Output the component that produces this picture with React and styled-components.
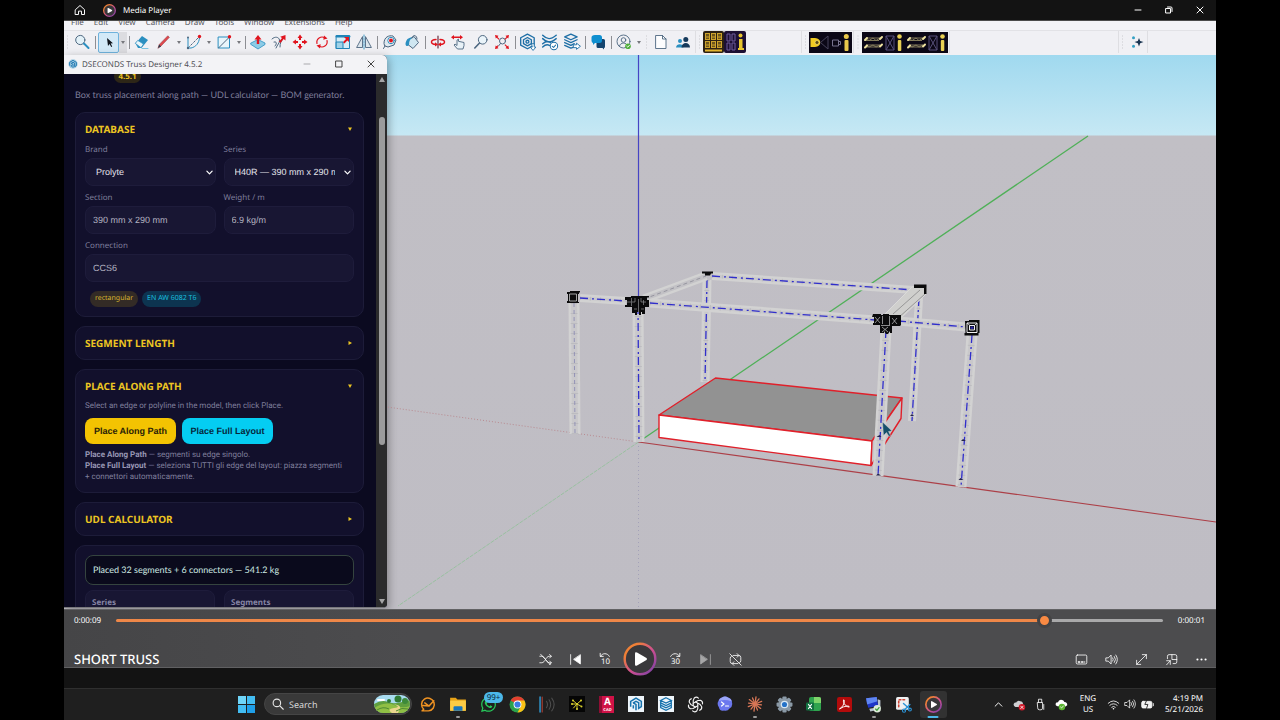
import React, { useState } from 'react';
import styled, { createGlobalStyle } from 'styled-components';
import { FaWhatsapp } from 'react-icons/fa';

const uiFont = '"Noto Sans", "Open Sans", sans-serif';
const leadFont = 'Lato, "Noto Sans", sans-serif';
const noteFont = 'Roboto, "Noto Sans", sans-serif';
const formFont = '"Liberation Sans", Arial, sans-serif';

const GlobalStyle = createGlobalStyle`
  * {
    box-sizing: border-box;
  }

  body {
    margin: 0;
    background: #000;
    font-family: ${uiFont};
    text-rendering: geometricPrecision;
    overflow: hidden;
  }

  button {
    display: flex;
    align-items: center;
    justify-content: center;
    margin: 0;
    padding: 0;
    border: 0;
    background: none;
    color: inherit;
    font: inherit;
  }

  button,
  input,
  select {
    text-rendering: inherit;
  }

  svg {
    display: block;
    flex: none;
  }
`;

const Screen = styled.div`
  display: flex;
  flex-direction: column;
  height: 100vh;
  padding: 0 5%;
`;

/* ---------- player title bar ---------- */

const TitleBar = styled.header`
  display: flex;
  align-items: center;
  height: 21px;
  flex: none;
  padding: 0 3px 0 9px;
  background: #131313;
  border-bottom: 1px solid #4c4c4c;
  color: #fff;
`;

const AppName = styled.span`
  flex: 1;
  padding: 2px 0 0 7px;
  font-size: 8px;
  line-height: 12px;
`;

const HomeButton = styled.button`
  width: 14px;
  margin-right: 16px;
`;

const CaptionButton = styled.button`
  width: 26px;
  height: 20px;
  margin-left: 5px;
`;

/* ---------- SketchUp chrome ---------- */

const MenuBar = styled.nav`
  display: flex;
  align-items: flex-end;
  gap: 10px;
  height: 9px;
  flex: none;
  padding: 0 7px 2px;
  overflow: hidden;
  background: #f3f3f7;
`;

const MenuLink = styled.a`
  color: #55565c;
  font-size: 8px;
  line-height: 10px;
  text-decoration: none;
`;

const Toolbar = styled.div`
  display: flex;
  height: 25px;
  flex: none;
  padding-bottom: 2px;
  background: #f0f0f4;
  border-top: 1px solid #e2e2e6;
`;

const ToolGroup = styled.div`
  display: grid;
  grid-auto-flow: column;
  grid-auto-columns: 1fr;
  width: ${props => props.$width}px;
`;

const Tool = styled.button`
  min-width: 0;
  height: 22px;
`;

const SelectedTool = styled(Tool)`
  width: 21px;
  height: 21px;
  align-self: center;
  margin: 0 0 0 1px;
  border: 1px solid #6fb2dc;
  border-radius: 2px;
  background: #d3e9f7;
`;

const Caret = styled.button`
  width: 8px;
  height: 21px;
  align-self: center;
  background: ${props => (props.$filled ? '#dcdce0' : 'none')};

  &::before {
    content: '';
    border: 2px solid transparent;
    border-top: 3px solid #77787d;
    border-bottom-width: 0;
  }
`;

const Separator = styled.span`
  width: 4px;
  height: 13px;
  align-self: center;
  background: linear-gradient(#8d8e93, #8d8e93) center / 1px 100% no-repeat;
`;

const Grip = styled.span`
  width: ${props => props.$width || 7}px;
  height: 16px;
  align-self: center;
  background: radial-gradient(circle, #c9c9ce 40%, transparent 45%) center / 3px 3px;
  background-clip: content-box;
  padding: 0 2px;
`;

const ToolbarEdge = styled.span`
  width: 2px;
  border-right: 1px solid #dedee2;
`;

const Gap = styled.span`
  flex: ${props => (props.$width ? 'none' : 1)};
  width: ${props => props.$width}px;
`;

const AssistantBar = styled.div`
  display: flex;
  width: 30px;
  margin-right: 68px;
  border: solid #dedee2;
  border-width: 0 1px;
`;

/* ---------- model viewport ---------- */

const Viewport = styled.main`
  display: flex;
  flex: 1;
  min-height: 0;
  background: linear-gradient(#a0d9ef 0, #c6e8f4 80px, #c1bfc5 81px, #bfbdc4 100%);
`;

const Scene = styled.svg`
  flex: 1;
  min-width: 0;
  width: 100%;
  height: 100%;
`;

const DialogWindow = styled.section`
  display: flex;
  flex-direction: column;
  flex: none;
  width: 323px;
  margin-bottom: 1px;
  overflow: hidden;
  border-bottom: 1px solid #77777b;
  border-radius: 0 5px 4px 0;
  background: #0b0a20;
  box-shadow: 2px 2px 8px rgba(0, 0, 0, 0.3);
`;

const DialogTitle = styled.header`
  display: flex;
  align-items: center;
  height: 19px;
  flex: none;
  padding: 0 0 1px 4px;
  background: #f3f3f6;
  color: #505157;
  font-size: 8px;
`;

const DialogName = styled.span`
  flex: 1;
  padding-left: 4px;
`;

const DialogButton = styled.button`
  width: 32px;
  height: 18px;
`;

const DialogBody = styled.div`
  display: flex;
  flex: 1;
  min-height: 0;
`;

const Content = styled.div`
  flex: 1;
  min-width: 0;
  overflow: hidden;
  padding: 0 12px 0 11px;
`;

const VersionRow = styled.div`
  margin-top: -4px;
  padding-left: 39px;
`;

const Badge = styled.span`
  display: block;
  width: 27px;
  border-radius: 7px;
  background: #2d2617;
  color: #e8c020;
  font-size: 8px;
  font-weight: 700;
  line-height: 13px;
  text-align: center;
`;

const Scrollbar = styled.div`
  display: flex;
  flex-direction: column;
  align-items: center;
  justify-content: space-between;
  width: 11px;
  padding: 3px 0;
  background: #2b2b2c;
`;

const Thumb = styled.span`
  width: 6px;
  height: 328px;
  margin-bottom: 120px;
  border-radius: 3px;
  background: #9b9b9c;
`;

const Lead = styled.p`
  margin: 6px 0 12px;
  color: #7f7e9b;
  font-family: ${leadFont};
  font-size: 9px;
  line-height: 11px;
`;

const Note = styled.p`
  margin: ${props => props.$margin || 0};
  color: #7f7e9b;
  font-family: ${noteFont};
  font-size: 8px;
  line-height: 11px;

  b {
    color: #9897b4;
  }
`;

const Card = styled.section`
  margin-bottom: 9px;
  padding: 9px;
  border: 1px solid #1d1c39;
  border-radius: 10px;
  background: #12102c;
`;

const CardHeader = styled.button`
  justify-content: space-between;
  width: 100%;
  height: 14px;
  padding-right: 1px;
  color: #ecc522;
  font-size: 10px;
  font-weight: 700;
  line-height: 14px;
`;

const Fields = styled.div`
  display: grid;
  grid-template-columns: 1fr 1fr;
  gap: 6px 8px;
  margin-top: 8px;
`;

const Field = styled.div`
  grid-column: ${props => (props.$wide ? '1 / -1' : 'auto')};
  min-width: 0;
`;

const Label = styled.label`
  display: block;
  margin-bottom: 2px;
  color: #7f7e9b;
  font-size: 8px;
  line-height: 12px;
`;

const TextInput = styled.input`
  display: block;
  width: 100%;
  height: 28px;
  padding: 0 7px;
  border: 1px solid #1e1c3b;
  border-radius: 8px;
  outline: 0;
  background: #181633;
  color: #b3b2c0;
  font-family: ${formFont};
  font-size: 9px;
`;

const SelectBox = styled.div`
  display: grid;
  align-items: center;

  > * {
    grid-area: 1 / 1;
  }

  svg {
    justify-self: end;
    margin-right: 3px;
    pointer-events: none;
  }
`;

const Select = styled.select`
  width: 100%;
  height: 28px;
  padding: 0 18px 0 10px;
  border: 1px solid #1e1c3b;
  border-radius: 8px;
  outline: 0;
  appearance: none;
  background: #181633;
  color: #e4e4ec;
  font-family: ${formFont};
  font-size: 9px;
`;

const Chips = styled.div`
  display: flex;
  gap: 4px;
  padding: 9px 5px 0;
`;

const Chip = styled.span`
  padding: 0 5px;
  border-radius: 8px;
  background: ${props => (props.$cyan ? '#0d3450' : '#332b26')};
  color: ${props => (props.$cyan ? '#19bede' : '#d9b52e')};
  font-size: 7px;
  line-height: 16px;
`;

const Actions = styled.div`
  display: flex;
  gap: 6px;
`;

const ActionButton = styled.button`
  width: 91px;
  height: 26px;
  border-radius: 8px;
  background: ${props => (props.$cyan ? '#05cdf2' : '#f3c302')};
  color: ${props => (props.$cyan ? '#06283c' : '#2a2208')};
  font-family: ${formFont};
  font-size: 9px;
  font-weight: 700;
`;

const Status = styled.output`
  display: block;
  padding: 0 7px;
  border: 1px solid #35443f;
  border-radius: 8px;
  background: #0a0a1c;
  color: #cfe9e2;
  font-family: ${leadFont};
  font-size: 9px;
  line-height: 28px;
`;

const Stats = styled.div`
  display: grid;
  grid-template-columns: 1fr 1fr;
  gap: 9px;
  margin-top: 5px;
`;

const Stat = styled.div`
  height: 40px;
  padding: 6px;
  border: 1px solid #1e1c3b;
  border-radius: 8px;
  background: #181633;
  color: #8584a3;
  font-size: 8px;
  font-weight: 700;
  line-height: 12px;
`;

/* ---------- playback controls ---------- */

const Controls = styled.section`
  height: 59px;
  flex: none;
  border-top: 1px solid #626264;
  border-bottom: 1px solid #606062;
  background: linear-gradient(90deg, #454547, #4c4c4e 30%);
  color: #fff;
`;

const SeekRow = styled.div`
  display: flex;
  align-items: center;
  height: 20px;
  padding: 0 11px 0 10px;
`;

const Time = styled.span`
  width: 42px;
  padding-top: 2px;
  font-size: 8px;
  line-height: 12px;
  text-align: ${props => (props.$end ? 'right' : 'left')};
`;

const Seek = styled.input`
  flex: 1;
  min-width: 0;
  height: 15px;
  margin: 0;
  appearance: none;
  background: none;

  &::-webkit-slider-runnable-track {
    height: 3px;
    border-radius: 2px;
    background: linear-gradient(90deg, #ee8748 89%, #a9a9aa 89%);
  }

  &::-webkit-slider-thumb {
    width: 15px;
    height: 15px;
    margin-top: -6px;
    appearance: none;
    border: 3px solid #434345;
    border-radius: 50%;
    background: #f98a43;
  }
`;

const ButtonRow = styled.div`
  display: grid;
  grid-template-columns: 1fr auto 1fr;
  align-items: center;
  height: 37px;
  padding: 20px 3px 0;
`;

const VideoTitle = styled.h1`
  margin: 0;
  padding-left: 7px;
  font-size: 13px;
  font-weight: 500;
  line-height: 14px;
`;

const ButtonGroup = styled.div`
  display: flex;
  align-items: center;
  justify-content: flex-end;
  gap: 6px;
  height: 18px;
`;

const IconButton = styled.button`
  width: 24px;
  height: 18px;
  opacity: ${props => (props.disabled ? 0.5 : 1)};
`;

const PlayButton = styled.button`
  position: relative;
  width: 34px;
  height: 34px;
`;

const LowerStrip = styled.div`
  height: 20px;
  flex: none;
  background: #131313;
`;

/* ---------- taskbar ---------- */

const Taskbar = styled.footer`
  display: flex;
  align-items: center;
  height: 32px;
  flex: none;
  padding: 0 13px 1px 174px;
  border-top: 1px solid #2f2f2f;
  background: #1f1f1f;
  color: #fff;
`;

const SearchBox = styled.div`
  display: flex;
  align-items: center;
  width: 148px;
  height: 22px;
  margin: 0 2px 0 9px;
  padding: 0 1px 0 7px;
  border: 1px solid #454545;
  border-radius: 11px;
  background: #393939;
`;

const SearchInput = styled.input`
  flex: 1;
  min-width: 0;
  padding: 0 0 0 5px;
  border: 0;
  outline: 0;
  background: none;
  color: #fff;
  font-family: ${uiFont};
  font-size: 9px;

  &::placeholder {
    color: #d8d8d8;
  }
`;

const Apps = styled.div`
  display: grid;
  grid-template-columns: repeat(18, 1fr);
  justify-items: center;
  width: 534px;
  flex: none;
`;

const AppButton = styled.button`
  position: relative;
  width: 27px;
  height: 27px;
  border-radius: 3px;
  background: ${props => (props.$active ? '#323232' : 'none')};

  &::after {
    content: '';
    position: absolute;
    bottom: 0;
    left: 50%;
    width: ${props => (props.$active ? 11 : 4)}px;
    height: 2px;
    border-radius: 1px;
    background: ${props => (props.$active ? '#4cb8ea' : '#9a9a9a')};
    transform: translateX(-50%);
    display: ${props => (props.$active || props.$running ? 'block' : 'none')};
  }
`;

const CountBadge = styled.span`
  position: absolute;
  top: 1px;
  left: 9px;
  padding: 0 3px;
  border-radius: 6px;
  background: #4cb8ea;
  color: #0c2a3a;
  font-size: 8px;
  line-height: 11px;
`;

const Tray = styled.div`
  display: flex;
  align-items: center;
  margin-left: auto;
`;

const TrayButton = styled.button`
  width: ${props => props.$width || 21}px;
  height: 24px;
`;

const TrayText = styled.span`
  width: ${props => props.$width}px;
  font-size: 8px;
  line-height: 11px;
  text-align: ${props => (props.$end ? 'right' : 'center')};
`;

/* ---------- drawings ---------- */

const Icon = ({ size = 16, box = 16, children, ...rest }) => (
  <svg
    width={size}
    height={size}
    viewBox={`0 0 ${box} ${box}`}
    fill="none"
    stroke="currentColor"
    strokeLinecap="round"
    strokeLinejoin="round"
    aria-hidden="true"
    {...rest}
  >
    {children}
  </svg>
);

const BLUE = '#2b8fc0';
const SLATE = '#4d6780';
const RED = '#e0141e';

const toolIcons = {
  search: (
    <Icon stroke={SLATE}>
      <circle cx="6.3" cy="6" r="4.6" fill="#e3f1f8" />
      <path d="M10 9.5l4.5 4.5" stroke={BLUE} strokeWidth="2" />
    </Icon>
  ),
  select: (
    <Icon>
      <path d="M6 4l1 8 1.6-2 1.6 3 1-.6-1.5-2.8 2.3-.3z" fill="#10151c" stroke="none" />
    </Icon>
  ),
  eraser: (
    <Icon>
      <path d="M1.5 9.5L8 2l6 4-6.5 8H4z" fill={BLUE} stroke="none" />
      <path d="M1.5 9.5l5.5 4.2L9.5 10 4 6.6z" fill="#e8f5fb" stroke={BLUE} strokeWidth=".7" />
      <path d="M8 14.5h6" stroke="#7cc4e2" />
    </Icon>
  ),
  pencil: (
    <Icon>
      <path d="M2 14l1.3-3.6L11.8 1.800l1.600 1.500-8.500 8.900z" fill="#e0474c" stroke="#9c4a50" strokeWidth=".6" />
      <path d="M2 14l1.2-3.4 1.9 1.8z" fill="#2e3d4e" stroke="none" />
    </Icon>
  ),
  arc: (
    <Icon stroke={BLUE}>
      <path d="M2 4v10h3C10 13 13 9 13.500 4" />
      <path d="M2 14L13 3" strokeDasharray="2 2" stroke={SLATE} />
      <circle cx="2" cy="3.500" r="1" fill={SLATE} stroke="none" />
      <circle cx="2" cy="14" r="1.200" fill={SLATE} stroke="none" />
      <circle cx="13.500" cy="2.500" r="1.700" fill={RED} stroke="none" />
    </Icon>
  ),
  rect: (
    <Icon stroke={BLUE}>
      <path d="M2.500 3h11v11h-11z" fill="#e8f5fb" />
      <path d="M2.500 14l11-11" stroke={SLATE} />
      <circle cx="13.500" cy="2.700" r="1.700" fill={RED} stroke="none" />
    </Icon>
  ),
  pushPull: (
    <Icon>
      <path d="M1 9l7-3.500L15 9v1.500L8 15l-7-4.500z" fill="#8ccbe6" stroke={BLUE} strokeWidth=".8" />
      <path d="M8 1l3.500 4.500H9.200V10H6.800V5.500H4.500z" fill={RED} stroke="none" />
    </Icon>
  ),
  follow: (
    <Icon stroke={SLATE}>
      <path d="M1 5c3-3 7-2 7.500 1S6 11 5 14M3 8c3-1 3 2 1 4M9 13c0-4 1-6 3-8" />
      <path d="M14.500 1v5.500L12.600 5 9.500 9 8 7.600 11 4 9.200 2.800z" fill={RED} stroke="none" />
    </Icon>
  ),
  move: (
    <Icon>
      <path
        d="M8 .5l2.500 3.500H9v2H7V4H5.500zM8 15.500L5.500 12H7v-2h2v2h1.500zM.5 8L4 5.500V7h2v2H4v1.500zM15.500 8L12 10.500V9h-2V7h2V5.500z"
        fill={RED}
        stroke="none"
      />
    </Icon>
  ),
  rotate: (
    <Icon stroke={RED} strokeWidth="1.200">
      <path d="M3 9.500A5.200 5.200 0 0 1 11 4M13 6.500A5.200 5.200 0 0 1 5 12" />
      <path d="M10 1.500l3.500 3-4.200 1.200zM6 14.500l-3.500-3 4.200-1.200z" fill={RED} stroke="none" />
    </Icon>
  ),
  scale: (
    <Icon stroke="#1f84b8">
      <path d="M1.500 1.500h13v13h-13z" fill="#d5ecf6" />
      <path d="M1.500 2.500h13" strokeWidth="2" />
      <path d="M1.500 8h6.500v6.500h-6.500z" fill="#9fd2e8" />
      <path d="M14 3v5L12.400 6.400l-3 3L8 8l3-3L9 3z" fill={RED} stroke="none" />
    </Icon>
  ),
  flip: (
    <Icon stroke={SLATE} strokeWidth=".9">
      <path d="M6.500 3v10.500H1zM9.500 3v10.500H15z" fill="#dde6ec" />
      <path d="M8 1v14" stroke={BLUE} strokeDasharray="2 1" />
    </Icon>
  ),
  tape: (
    <Icon stroke={SLATE}>
      <path d="M2 9c0-6 5-8 9-7l3 4-2 5-6 2-3-1z" fill="#dfe8ef" />
      <circle cx="9" cy="6.500" r="3.200" stroke={BLUE} fill="#fff" />
      <circle cx="9" cy="6.500" r="2" fill={RED} stroke="none" />
      <path d="M3 12l-1.500 2.500" />
    </Icon>
  ),
  paint: (
    <Icon stroke={SLATE}>
      <path d="M4 6l6-3.500 4.500 6L9 14.500 4.500 11z" fill="#cfe6f1" />
      <path d="M1.500 10C2 5 5 3 9 3.500c-3 1-4 3.500-4 7.500-1.500 2-3.500 1-3.500-1z" fill={BLUE} stroke="none" />
      <path d="M8 4c1-4 5-3 5 1" />
    </Icon>
  ),
  orbit: (
    <Icon stroke={RED} strokeWidth="1.500">
      <path d="M6 5.500C0 6 0 10 6 10.500M10 5.500c6 .5 6 4.500 0 5" />
      <path d="M8 2v12" stroke="#6b3040" strokeWidth="1.200" />
      <path d="M5 8.300l3 2.200-3 2zM11 8.300l-3 2.200 3 2z" fill={RED} stroke="none" />
    </Icon>
  ),
  pan: (
    <Icon stroke={SLATE} strokeWidth=".9">
      <path d="M6 6.500v5L4 10l-1 1 3.500 4H12l1-3.500V8.500L7.500 7.300V5.500z" fill="#e8f1f7" />
      <path d="M0 3.200L3 1v1.500h6V1l3 2.200-3 2.200V4H3v1.400z" fill={RED} stroke="none" />
    </Icon>
  ),
  zoom: (
    <Icon stroke={SLATE}>
      <circle cx="9.700" cy="5.800" r="4.300" fill="#eaf4fa" />
      <path d="M6.300 9.200L1.800 14" strokeWidth="1.600" />
    </Icon>
  ),
  extents: (
    <Icon stroke={SLATE}>
      <circle cx="8.500" cy="7" r="3" />
      <path d="M6.500 9.500L4.500 12" />
      <path
        d="M1 1l3.500.8L3.500 3l2 2-.8.800-2-2L1.800 4.600zM15 1l-3.500.8 1 1.200-2 2 .8.800 2-2 1 .800zM15 15l-3.500-.8 1-1.200-2-2 .8-.8 2 2 1-.8zM1 15l3.500-.8-1-1.200 1-1-.8-.8-1 1-1-.8z"
        fill={RED}
        stroke="none"
      />
    </Icon>
  ),
  warehouse: (
    <Icon size={18} stroke="#1f6fa6" strokeWidth="1.200">
      <path d="M7.500 1l6 3.200v6.600L7.500 14l-6-3.200V4.200z" />
      <path d="M7.500 4l3.500 2v3.500L7.500 11.500 4 9.500V6z" />
      <circle cx="7.500" cy="7.700" r="1.300" />
      <path d="M11.500 9.500h2v3h1.500l-2.500 3-2.500-3h1.500z" fill="#fff" strokeWidth=".8" />
    </Icon>
  ),
  extensions: (
    <Icon size={18} stroke="#1f6fa6" strokeWidth="1.300">
      <path d="M1.500 2c4 4 7 4 12 0M1.500 5c4 4 7 4 12 0M1.500 9.500c3-2.500 5-2.500 7-1M1.500 12.500c2-2 4-2.500 6-1.500" />
      <circle cx="11.500" cy="11.500" r="3.300" fill="#fff" strokeWidth=".9" />
      <path d="M10 11.800l1.200 1 1.800-2" strokeWidth=".9" />
    </Icon>
  ),
  layers: (
    <Icon size={18} stroke="#1f6fa6" strokeWidth="1.200">
      <path d="M7 1l5.500 2.500L7 6 1.500 3.500zM1.500 6L7 8.500 12.500 6M1.500 8.500L7 11l3-1.500M1.500 11L7 13.500l2-.8" />
      <path d="M9.500 10.500H12V9l3.500 2.800L12 14.500V13H9.500z" fill="#fff" strokeWidth=".8" />
    </Icon>
  ),
  chat: (
    <Icon stroke="none">
      <path d="M9 5h4.500Q15 5 15 6.500v6Q15 14 14 14v1.500L12.500 14H8Q6.500 14 6.500 12.500V7z" fill="#14446e" />
      <path d="M5 1h4.500Q12 1 12 3.500v3Q12 9 9.500 9H5l-2 2V9Q1.500 8.500 1.500 6.500v-3Q1.500 1 5 1z" fill="#0f8fd0" />
    </Icon>
  ),
  account: (
    <Icon stroke={SLATE} strokeWidth=".9">
      <circle cx="7.500" cy="7.500" r="6.500" />
      <circle cx="7.500" cy="6" r="2.300" />
      <path d="M3.500 12c.5-4 7.500-4 8 0" />
      <circle cx="12" cy="12.200" r="2.800" fill="#4fae3a" stroke="none" />
      <path d="M10.800 12.200l1 1 1.600-1.900" stroke="#fff" />
    </Icon>
  ),
  doc: (
    <Icon stroke={SLATE} strokeWidth=".9">
      <path d="M3 1.500h6.500l3.500 3.500v9.500H3z" fill="#fdfdfe" />
      <path d="M9.500 1.500V5H13" />
    </Icon>
  ),
  people: (
    <Icon stroke="none">
      <circle cx="5" cy="7" r="2" fill={BLUE} />
      <path d="M1 13.500C1 9 8.500 9 8.500 13.500z" fill={BLUE} />
      <circle cx="10.800" cy="5.500" r="2.500" fill="#163a5c" />
      <path d="M6.500 13.500c0-6 8.500-6 8.500 0z" fill="#163a5c" />
    </Icon>
  ),
  sparkle: (
    <Icon stroke="none">
      <path d="M10 4l1.200 3L14.500 8l-3.300 1.200L10 12.500 8.800 9.200 5.500 8l3.300-1z" fill="#17324f" />
      <circle cx="4.500" cy="3.700" r="1.500" fill="#33a0c4" />
      <circle cx="4.500" cy="12.300" r="1.500" fill="#33a0c4" />
    </Icon>
  ),
};

const GridPlugin = () => (
  <svg width="44" height="22" viewBox="0 0 44 22" aria-hidden="true">
    <rect width="21" height="22" rx="2" fill="#2c2113" />
    <rect x="21" width="22" height="22" rx="2" fill="#1c0f33" />
    {[2, 8, 14].map(x =>
      [2, 10].map(y => (
        <g key={`${x}-${y}`} fill="#6d551c" stroke="#cda32c">
          <rect x={x + 0.5} y={y + 0.5} width="4" height="6" />
          <path d={`M${x + 1} ${y + 4}h3`} />
        </g>
      ))
    )}
    <path d="M2 19.500h17" stroke="#e4b62f" strokeWidth="2" />
    <path d="M24 3h3v7h-3zM29 3h3v7h-3zM24 12h3v7h-3zM29 12h3v7h-3z" fill="none" stroke="#6f5c9e" />
    <circle cx="37.500" cy="4.500" r="2" fill="#e9c62f" />
    <path d="M36 8h3.500v9H41v2h-6v-2h1z" fill="#e9c62f" />
  </svg>
);

const CameraPlugin = () => (
  <svg width="43" height="21" viewBox="0 0 43 21" aria-hidden="true">
    <path fill="#0b0716" d="M0 0h43v21H0z" />
    <path d="M1.500 6H6c7 0 7 9 0 9H1.500z" fill="#efca23" />
    <circle cx="8" cy="10.500" r="2" fill="#5a4a12" stroke="#f5df74" strokeWidth=".7" />
    <path d="M19 4v13l-7.500-6.500z" fill="none" stroke="#46425a" />
    <path d="M23.500 8h6v6h-6zM30 9.500h1.500v3H30" fill="none" stroke="#77728e" />
    <circle cx="37.300" cy="4.500" r="2.500" fill="#e9c84b" />
    <rect x="35.500" y="8" width="4" height="11" rx="1" fill="#e9c84b" />
  </svg>
);

const TrussGlyph = ({ x }) => (
  <g transform={`translate(${x} 0)`}>
    <path
      d="M4 6h14M3 8.500h14M4 13h14M3 15h14M4 6l3 2.500 4-2.500 3 2.500 4-2.500M4 13l3 2 4-2 3 2 4-2"
      fill="none"
      stroke="#8c8460"
      strokeWidth=".9"
    />
    <path d="M3 8l2-2M18 7l2-2M3 15.500l2-2M18 14.500l2-2" stroke="#efe3a0" strokeWidth="2" strokeLinecap="round" />
    <path d="M24 4h8v14h-8zM24 4l8 14M32 4l-8 14" fill="none" stroke="#564f78" />
    <circle cx="37.500" cy="4.500" r="2.300" fill="#e9d053" />
    <rect x="35.800" y="8" width="3.500" height="11" rx="1" fill="#e9d053" />
  </g>
);

const TrussPlugin = () => (
  <svg width="86" height="21" viewBox="0 0 86 21" aria-hidden="true">
    <path fill="#0b0716" d="M0 0h86v21H0z" />
    <TrussGlyph x={0} />
    <TrussGlyph x={43} />
  </svg>
);

const SketchUpMark = ({ size = 12, tile }) => (
  <svg width={size} height={size} viewBox="0 0 18 18" fill="none" stroke="#1672ad" strokeWidth="1.700" aria-hidden="true">
    {tile ? (
      <path d="M0 0h18v18H0z" fill="#eef5fa" stroke="none" />
    ) : (
      <circle cx="9" cy="9" r="8.500" fill="#a9cfe4" stroke="none" />
    )}
    {tile === 'layout' ? (
      <path d="M9 2l6 3-6 3-6-3zM3 5v8l6 3 6-3V5M3 7.700l6 3 6-3M3 10.300l6 3 6-3" strokeWidth="1.400" />
    ) : (
      <path d="M3 12V6l6-3.500L15 6v6l-3 2V7.500L9 6 5.500 8M9 16V9.500L6 8M6 14v-3.500" />
    )}
  </svg>
);

// Each strut runs between two joints; rear ones stay thinner and fainter.
const struts = [
  { from: [707, 280], to: [705, 382], width: 9 },
  { from: [712, 276], to: [914, 290], width: 8 },
  { from: [919, 298], to: [912, 421], width: 8 },
  { from: [574, 303], to: [575, 434], width: 11, faint: true },
  { from: [580, 298], to: [626, 301], width: 8 },
  { from: [650, 303], to: [875, 320], width: 9 },
  { from: [638, 306], to: [639, 442], width: 11 },
  { from: [898, 321], to: [966, 327], width: 9 },
  { from: [972, 335], to: [961, 487], width: 11 },
  { from: [886, 330], to: [878, 476], width: 11 },
];

const Strut = ({ from, to, width, faint }) => {
  const d = `M${from.join(' ')}L${to.join(' ')}`;
  return (
    <g fill="none">
      <path d={d} stroke="#d2d2d2" strokeWidth={width} />
      <path d={d} stroke="#c9c8cb" strokeWidth={width - 5} />
      <path d={d} stroke="#a9a9ae" strokeWidth={width - 4} strokeDasharray="1 9" opacity=".4" />
      <path
        d={d}
        stroke={faint ? '#7c7cae' : '#302ecb'}
        strokeWidth={faint ? 0.7 : 1.3}
        strokeDasharray={faint ? '4 3' : '8 4 2 3'}
      />
    </g>
  );
};

const ModelScene = () => (
  <Scene viewBox="387 55 829 554" preserveAspectRatio="xMinYMin slice" role="img" aria-label="Truss model">
    <g fill="none">
      <path d="M638.500 442L387 407" stroke="#b98a90" strokeDasharray="1 2" />
      <path d="M638.500 442L398 606" stroke="#90c097" strokeDasharray="4 1" opacity=".8" />
      <path d="M638.500 442V609" stroke="#a3a1b8" strokeDasharray="1 3" />
      <path d="M638.500 442L1088 136" stroke="#4fb058" strokeWidth="1.300" />
      <path d="M638.500 442L1216 522" stroke="#ac3f47" strokeWidth="1.100" />
      <path d="M638.500 55V442" stroke="#4644c4" strokeWidth="1.200" />
    </g>

    {struts.slice(0, 3).map(strut => (
      <Strut key={strut.from.join()} {...strut} />
    ))}
    <path d="M644 299L706 276" stroke="#d2d2d2" strokeWidth="9" />
    <path d="M644 299L706 276" stroke="#c2c1c5" strokeWidth="4" />
    <path d="M644 299L706 276" stroke="#8a8a96" strokeDasharray="4 3" strokeWidth=".8" />
    <path d="M884 315L912 287H926V294L898 321z" fill="#cfcfcd" stroke="#dadad9" />
    <path d="M893 314L920 290M898 318L925 294" stroke="#7e7e80" strokeWidth=".7" />

    <g stroke="#e0202a" strokeWidth="1.400" strokeLinejoin="round">
      <path d="M715.500 378L902 398 872 441 659 415z" fill="#929292" />
      <path d="M659 415L872 441 871 465.500 659 437.500z" fill="#fff" />
      <path d="M902 398L901 418.500 871 465.500 872 441z" fill="#c6c5c9" />
    </g>

    {struts.slice(3).map(strut => (
      <Strut key={strut.from.join()} {...strut} />
    ))}

    <g fill="#0b0b0c">
      <path d="M567 292h12v2h-1v8h1v1h-12v-2h1v-7h-1zM570 291h10v1.500h-10z" />
      <path d="M569.500 294h7v7h-7z" fill="none" stroke="#c8c8c8" strokeWidth=".8" />

      <path d="M625 297h6v-1h18v1.500h-2V300h2v7h-4v7h-3v-2h-1v3h-2v-3h-2v3h-2v-2h-3v-6h-7v-2h2v-5h-2z" />
      <path
        d="M631.500 298v8M627 302h4M635 298v4h-3M641 298v4h5M638.500 299v13M634 309h3M641 309h3M643.500 300v5"
        stroke="#8f8f94"
        strokeWidth=".7"
      />

      <path d="M702 271.500h11v2h-2l-1 2h-5v-2h-3z" />

      <path d="M873 314h8v1h2v-1h6v1h12v10l-1 1h-8v7h-2v-2l-2 3h-2l-2-3v2h-4v-8h-7v-2h1v-6h-2z" />
      <path
        d="M875 317l5 6M880 317l-5 6M882.500 316v8M889.500 316v9M882 327l6 5M888 327l-6 5M892 318l5 6M897 318l-5 6M881 325.500h9"
        stroke="#c4c4c7"
        strokeWidth=".7"
      />

      <path d="M914 284.500h12.500V294H924v-6h-10z" />

      <path d="M965 321h4v-1h10.500v13h-1v2.500h-14V333h1z" />
      <path d="M967 323h10v9.500h-10zM969.500 325.500h5v4.500h-5z" fill="none" stroke="#f1f1f3" />
      <path d="M967 323l3 2.500M977 323l-2.500 2.500" stroke="#f1f1f3" strokeWidth=".8" />
      <path d="M970.500 326.500h3v2.500h-3z" fill="#2826a0" />

      <path
        d="M876 475.500l2-2 3 2zM958.500 480l2-2 3 2zM961 441l2-2 3 2zM876.500 437l3-2 2 2zM910 416l2-2 2 2z"
        fill="#23234c"
      />
    </g>
    <path d="M882.500 422l1 13.500 3-3 2.500 4 1.500-1-2-4 3.500-.5z" fill="#15506b" stroke="#d9d9dc" strokeWidth=".4" />
  </Scene>
);

const PlayLogo = ({ size = 13 }) => (
  <svg width={size} height={size} viewBox="0 0 34 34" aria-hidden="true">
    <defs>
      <linearGradient id="ring" x1="0" y1="0" x2="1" y2="1">
        <stop offset=".2" stopColor="#ef8036" />
        <stop offset=".55" stopColor="#cf4f90" />
        <stop offset="1" stopColor="#7440a8" />
      </linearGradient>
    </defs>
    <circle cx="17" cy="17" r="15.300" fill="#39383b" stroke="url(#ring)" strokeWidth={size > 20 ? 2.4 : 3.4} />
    <path d="M12 11.500q0-2 2-1l9.500 5.500q1 1 0 2L14 23.500q-2 1-2-1z" fill="#fff" />
  </svg>
);

const SkipText = ({ value, flipped }) => (
  <Icon size={14}>
    <g transform={flipped ? 'matrix(-1 0 0 1 16 0)' : undefined}>
      <path d="M3 5C4.500 .8 11 .8 13 5M2.500 1.500V5H6" />
    </g>
    <text x="8.500" y="14" textAnchor="middle" fontSize="9" fontFamily={uiFont} fill="#fff" stroke="none">
      {value}
    </text>
  </Icon>
);

const ShuffleIcon = () => (
  <Icon size={13}>
    <path d="M1 4h2.500c4 0 5 8 9 8H15M1 12h2.500c4 0 5-8 9-8H15M13 1.800L15.200 4 13 6.200M13 9.800l2.200 2.200-2.200 2.200M2 1.500l12 13" />
  </Icon>
);

const RepeatIcon = () => (
  <Icon size={13}>
    <path d="M5 3h7q2.500 0 2.500 2.500v4q0 2-1.500 2.500M11 13H4q-2.500 0-2.500-2.500v-4Q1.500 4.500 3 4M10 .8L12.200 3 10 5.200M6 10.800L3.800 13 6 15.200M1 1l14 14" />
  </Icon>
);

const PrevIcon = ({ flipped }) => (
  <Icon size={13} fill="currentColor">
    <g transform={flipped ? 'matrix(-1 0 0 1 16 0)' : undefined}>
      <path d="M2 2v12" />
      <path d="M14 2.500v11L6 8z" />
    </g>
  </Icon>
);

const SpeakerIcon = ({ size = 13 }) => (
  <Icon size={size}>
    <path d="M1.500 6H4l3.500-3.500v11L4 10H1.500zM9.500 6q1.500 2 0 4M11.500 4.300q3 3.700 0 7.400M13.300 2.500q4 5.500 0 11" />
  </Icon>
);

const WifiIcon = () => (
  <Icon size={13}>
    <path d="M1.500 6.500q6.500-6 13 0M3.500 9q4.500-4 9 0M5.800 11.300q2.200-2 4.400 0" />
    <circle cx="8" cy="13.200" r="1" fill="#fff" stroke="none" />
  </Icon>
);

const StartIcon = () => (
  <svg width="17" height="17" viewBox="0 0 17 17" aria-hidden="true">
    <path d="M0 0h8v8H0z" fill="#6fd5f8" />
    <path d="M9 0h8v8H9zM0 9h8v8H0z" fill="#43bdf2" />
    <path d="M9 9h8v8H9z" fill="#1f9fe8" />
  </svg>
);

const Landscape = () => (
  <svg width="36" height="18" viewBox="0 0 36 18" aria-hidden="true">
    <clipPath id="pill">
      <rect width="36" height="18" rx="9" />
    </clipPath>
    <g clipPath="url(#pill)">
      <path d="M0 0h36v18H0z" fill="#a8dcf0" />
      <path d="M0 9q8-5 14-2T36 5v13H0z" fill="#5f9f3e" />
      <path d="M0 13q12-7 20-3t16 1v7H0z" fill="#8fbf45" />
      <path d="M18 18q-6-4 2-5t-1-4q8 1 7 4t-2 5z" fill="#e9d68e" />
      <circle cx="24" cy="4" r="3.500" fill="#2f7a35" />
      <circle cx="31" cy="6" r="3" fill="#3c8a3a" />
      <circle cx="15" cy="6" r="2" fill="#2f7a35" />
      <path d="M3 15q6-4 12-1M22 16q6-4 12-2" stroke="#4f8a34" fill="none" />
      <path d="M4 5h6" stroke="#fff" strokeWidth="2" strokeLinecap="round" />
    </g>
  </svg>
);

const rays = count => Array.from({ length: count }, (_, i) => (360 / count) * i);

const apps = [
  {
    name: 'Mail',
    icon: (
      <Icon size={17} stroke="#ee9222" strokeWidth="1.400">
        <path d="M3.500 12.500A6 6 0 1 1 8 14H2zM4.500 6.500L8.500 9.500 13 4.500M2.800 9L8.500 9.500" />
      </Icon>
    ),
  },
  {
    name: 'File Explorer',
    running: true,
    icon: (
      <Icon size={18} stroke="none">
        <path d="M1 2.500h5l1.500 1.500H15v10H1z" fill="#e8a317" />
        <path d="M1 5h14v9H1z" fill="#fccb45" />
        <path d="M4 14v-3q0-1 1-1h6q1 0 1 1v3z" fill="#1876bd" />
      </Icon>
    ),
  },
  { name: 'WhatsApp', badge: '99+', icon: <FaWhatsapp size={17} color="#27c75b" /> },
  {
    name: 'Chrome',
    icon: (
      <Icon size={17} stroke="none">
        <circle cx="8" cy="8" r="7.500" fill="#2ba24c" />
        <path d="M8 8L1.500 4.250A7.500 7.500 0 0 1 14.500 4.250z" fill="#e4402f" />
        <path d="M8 4.250h6.500A7.500 7.500 0 0 1 8 15.500L11.500 9z" fill="#fbc116" />
        <circle cx="8" cy="8" r="3.700" fill="#fff" />
        <circle cx="8" cy="8" r="2.900" fill="#3a7de0" />
      </Icon>
    ),
  },
  {
    name: 'Audio monitor',
    icon: (
      <Icon size={17} stroke="#4d4d4d">
        <path d="M1 1v14" stroke="#2d8fc4" strokeWidth="1.500" />
        <path d="M3 1v14" stroke="#b34235" />
        <path d="M7 5q2 3 0 6M9.500 3.500q3 4.500 0 9M12 2q4.500 6 0 12" />
      </Icon>
    ),
  },
  {
    name: 'Node tool',
    icon: (
      <Icon size={16} stroke="#d8cf2c">
        <path d="M0 0h16v16H0z" fill="#050505" stroke="none" />
        <path d="M8 8L4 4.500M8 8l4-3.500M8 8v5M8 8H3M8 8l4.500 2.500M8 8L4.500 12" />
        {[[4, 4.5], [12, 4.5], [8, 13], [3, 8], [12.5, 10.5], [8, 8]].map(([x, y]) => (
          <circle key={`${x}-${y}`} cx={x} cy={y} r="1" fill="#d8cf2c" stroke="none" />
        ))}
      </Icon>
    ),
  },
  {
    name: 'AutoCAD',
    icon: (
      <svg width="15" height="17" viewBox="0 0 15 17" aria-hidden="true">
        <path d="M0 0h15v17H0z" fill="#d11247" />
        <path d="M0 0h3v17H0z" fill="#8f0e33" />
        <text x="8.500" y="9" textAnchor="middle" fontSize="10" fontWeight="700" fontFamily={uiFont} fill="#fff">
          A
        </text>
        <text x="8.500" y="15" textAnchor="middle" fontSize="4" fontWeight="700" fontFamily={uiFont} fill="#fff">
          CAD
        </text>
      </svg>
    ),
  },
  { name: 'SketchUp', icon: <SketchUpMark size={16} tile="model" /> },
  { name: 'LayOut', icon: <SketchUpMark size={16} tile="layout" /> },
  {
    name: 'ChatGPT',
    icon: (
      <Icon size={17} box={24} stroke="#f2f2f2" strokeWidth="1.600">
        {rays(6).map(angle => (
          <path key={angle} d="M8.800 13.800V6.200l1.500-3.400q3-2.300 5.800.2" transform={`rotate(${angle} 12 12)`} />
        ))}
      </Icon>
    ),
  },
  {
    name: 'Terminal chat',
    icon: (
      <Icon size={16} stroke="none">
        <path d="M5 1.500q3-2 6 0 4 1 4 5 1 4-2.500 6-2 3-5.500 2-4 1-5-3Q-.5 8 1.500 5q.5-3 3.500-3.500z" fill="#6b77ee" />
        <path d="M5 1.500q3-2 6 0 3 1 3.800 4Q8 3 2 5q.5-3 3-3.500z" fill="#9ba6f8" />
        <path d="M4.500 6l2.500 2-2.500 2M8.500 10h3" stroke="#fff" strokeWidth="1.200" />
      </Icon>
    ),
  },
  {
    name: 'Claude',
    running: true,
    icon: (
      <Icon size={16} stroke="#d97757" strokeWidth="1.300">
        {rays(12).map((angle, i) => (
          <path key={angle} d={i % 2 ? 'M8 8V1.500' : 'M8 8V.8'} transform={`rotate(${angle + 8} 8 8)`} />
        ))}
      </Icon>
    ),
  },
  {
    name: 'Settings',
    icon: (
      <Icon size={17} stroke="none">
        {rays(4).map(angle => (
          <rect key={angle} x="6" y=".5" width="4" height="15" rx="1" fill="#8a99a6" transform={`rotate(${angle / 2} 8 8)`} />
        ))}
        <circle cx="8" cy="8" r="5.800" fill="#8a99a6" />
        <circle cx="8" cy="8" r="3.600" fill="#d9e8f4" />
        <circle cx="8" cy="8" r="2.400" fill="#2472c8" />
      </Icon>
    ),
  },
  {
    name: 'Excel',
    icon: (
      <Icon size={16} stroke="none">
        <rect x="3" y="1" width="12" height="14" rx="2" fill="#2fa34e" />
        <path d="M8 1h5q2 0 2 2v4H8z" fill="#7fd46a" />
        <rect y="6.500" width="8" height="8" rx="1" fill="#127040" />
        <path d="M2.500 8.500l3 4M5.500 8.500l-3 4" stroke="#fff" strokeWidth="1.200" />
      </Icon>
    ),
  },
  {
    name: 'Acrobat',
    icon: (
      <Icon size={15}>
        <rect width="16" height="16" rx="2.500" fill="#b30b0b" stroke="none" />
        <path d="M3 12.500C6 11 8 7 7.800 3.500q-1-1.500-1 1C7.500 8 10 10.500 13 10.800q.5-1.300-2-1.200-4 .3-8 2.900z" stroke="#fff" />
      </Icon>
    ),
  },
  {
    name: 'Remote desktop',
    running: true,
    icon: (
      <Icon size={17} stroke="none">
        <path d="M1 2l10-1 1.500 8.500L3 11z" fill="#1d35c8" />
        <path d="M1 2l10-1 .7 4L2 8z" fill="#5f86f2" />
        <path d="M12 3l2.500 1v8l-2 1zM4 12l6-1 2 2-7 1.500z" fill="#b9c3cf" />
        <circle cx="11.500" cy="12" r="3.500" fill="#dcebd8" />
        <path d="M10 12.300l1.200 1.200 2-2.600" stroke="#3c9a3a" strokeWidth="1.200" />
      </Icon>
    ),
  },
  {
    name: 'Snipping Tool',
    icon: (
      <Icon size={17} stroke="none">
        <rect x="1" y="1" width="12" height="12" rx="1.500" fill="#eef0f2" />
        <path d="M3.500 10V3.500h7" stroke="#cf4434" strokeWidth="1.500" strokeDasharray="1.500 2" />
        <path d="M8 7l5.500 5M14 8l-5 5" stroke="#2b93d6" strokeWidth="1.300" />
        <circle cx="8.500" cy="13.800" r="1.500" stroke="#2b93d6" />
        <circle cx="14" cy="12.800" r="1.400" stroke="#2b93d6" />
      </Icon>
    ),
  },
  { name: 'Media Player', active: true, icon: <PlayLogo size={17} /> },
];

/* ---------- composed parts ---------- */

const tool = name => (
  <Tool key={name} aria-label={name}>
    {toolIcons[name]}
  </Tool>
);

const SketchUpToolbar = () => (
  <Toolbar role="toolbar">
    <Grip />
    <ToolGroup $width={22}>{tool('search')}</ToolGroup>
    <Separator />
    <SelectedTool aria-label="select">{toolIcons.select}</SelectedTool>
    <Caret $filled aria-label="Selection options" />
    <Separator />
    <ToolGroup $width={44}>{['eraser', 'pencil'].map(tool)}</ToolGroup>
    <Caret aria-label="Line options" />
    <ToolGroup $width={22}>{tool('arc')}</ToolGroup>
    <Caret aria-label="Arc options" />
    <ToolGroup $width={22}>{tool('rect')}</ToolGroup>
    <Caret aria-label="Shape options" />
    <Separator />
    <ToolGroup $width={128}>{['pushPull', 'follow', 'move', 'rotate', 'scale', 'flip'].map(tool)}</ToolGroup>
    <Separator />
    <ToolGroup $width={44}>{['tape', 'paint'].map(tool)}</ToolGroup>
    <Separator />
    <ToolGroup $width={86}>{['orbit', 'pan', 'zoom', 'extents'].map(tool)}</ToolGroup>
    <Separator />
    <ToolGroup $width={66}>{['warehouse', 'extensions', 'layers'].map(tool)}</ToolGroup>
    <Separator />
    <ToolGroup $width={22}>{tool('chat')}</ToolGroup>
    <Separator />
    <ToolGroup $width={22}>{tool('account')}</ToolGroup>
    <Caret aria-label="Account options" />
    <Grip />
    <ToolGroup $width={44}>{['doc', 'people'].map(tool)}</ToolGroup>
    <ToolbarEdge />
    <Grip />
    <Tool aria-label="Panel plugin">
      <GridPlugin />
    </Tool>
    <Gap $width={53} />
    <ToolbarEdge />
    <Grip />
    <Tool aria-label="Camera plugin">
      <CameraPlugin />
    </Tool>
    <ToolbarEdge />
    <Grip $width={8} />
    <Tool aria-label="Truss plugin">
      <TrussPlugin />
    </Tool>
    <ToolbarEdge />
    <Gap />
    <AssistantBar>
      <Grip />
      <ToolGroup $width={21}>{tool('sparkle')}</ToolGroup>
    </AssistantBar>
  </Toolbar>
);

const Arrow = ({ direction }) => (
  <svg width="6" height="6" viewBox="0 0 6 6" fill="currentColor" aria-hidden="true">
    {direction === 'down' && <path d="M1 1.500h4L3 5z" />}
    {direction === 'right' && <path d="M1.500 1L5 3 1.500 5z" />}
  </svg>
);

const Section = ({ title, open, children }) => (
  <Card>
    <CardHeader aria-expanded={!!open}>
      {title}
      <Arrow direction={open ? 'down' : 'right'} />
    </CardHeader>
    {children}
  </Card>
);

const SelectField = ({ id, label, value }) => (
  <Field>
    <Label htmlFor={id}>{label}</Label>
    <SelectBox>
      <Select id={id} defaultValue={value}>
        <option>{value}</option>
      </Select>
      <Icon size={7} box={8} stroke="#fff" strokeWidth="1.400">
        <path d="M1 2.500l3 3 3-3" />
      </Icon>
    </SelectBox>
  </Field>
);

const ReadField = ({ id, label, value, wide }) => (
  <Field $wide={wide}>
    <Label htmlFor={id}>{label}</Label>
    <TextInput id={id} value={value} readOnly />
  </Field>
);

const TrussDesigner = () => (
  <DialogWindow>
    <DialogTitle>
      <SketchUpMark size={10} />
      <DialogName>DSECONDS Truss Designer 4.5.2</DialogName>
      <DialogButton aria-label="Minimize dialog">
        <Icon size={8} box={8} stroke="#a9a9ad">
          <path d="M1 4h6" />
        </Icon>
      </DialogButton>
      <DialogButton aria-label="Maximize dialog">
        <Icon size={8} box={8} stroke="#444">
          <path d="M1 1h6v6H1z" />
        </Icon>
      </DialogButton>
      <DialogButton aria-label="Close dialog">
        <Icon size={8} box={8} stroke="#444">
          <path d="M1 1l6 6M7 1L1 7" />
        </Icon>
      </DialogButton>
    </DialogTitle>
    <DialogBody>
      <Content>
        <VersionRow>
          <Badge>4.5.1</Badge>
        </VersionRow>
        <Lead>Box truss placement along path — UDL calculator — BOM generator.</Lead>

        <Section title="DATABASE" open>
          <Fields>
            <SelectField id="brand" label="Brand" value="Prolyte" />
            <SelectField id="series" label="Series" value="H40R — 390 mm x 290 mm" />
            <ReadField id="section" label="Section" value="390 mm x 290 mm" />
            <ReadField id="weight" label="Weight / m" value="6.9 kg/m" />
            <ReadField id="connection" label="Connection" value="CCS6" wide />
          </Fields>
          <Chips>
            <Chip>rectangular</Chip>
            <Chip $cyan>EN AW 6082 T6</Chip>
          </Chips>
        </Section>

        <Section title="SEGMENT LENGTH" />

        <Section title="PLACE ALONG PATH" open>
          <Note $margin="7px 0">Select an edge or polyline in the model, then click Place.</Note>
          <Actions>
            <ActionButton>Place Along Path</ActionButton>
            <ActionButton $cyan>Place Full Layout</ActionButton>
          </Actions>
          <Note $margin="5px 0 1px">
            <b>Place Along Path</b> — segmenti su edge singolo.
            <br />
            <b>Place Full Layout</b> — seleziona TUTTI gli edge del layout: piazza segmenti +&nbsp;connettori
            automaticamente.
          </Note>
        </Section>

        <Section title="UDL CALCULATOR" />

        <Card>
          <Status>Placed 32 segments + 6 connectors — 541.2 kg</Status>
          <Stats>
            <Stat>Series</Stat>
            <Stat>Segments</Stat>
          </Stats>
        </Card>
      </Content>
      <Scrollbar>
        <Icon size={6} box={6} fill="#a5a5a6" stroke="none">
          <path d="M3 0l3 5H0z" />
        </Icon>
        <Thumb />
        <Icon size={6} box={6} fill="#a5a5a6" stroke="none">
          <path d="M0 1h6L3 6z" />
        </Icon>
      </Scrollbar>
    </DialogBody>
  </DialogWindow>
);

const PlayerControls = () => {
  const [position, setPosition] = useState(892);

  return (
    <Controls>
      <SeekRow>
        <Time>0:00:09</Time>
        <Seek
          type="range"
          min="0"
          max="1000"
          aria-label="Seek"
          value={position}
          onChange={e => setPosition(Number(e.target.value))}
        />
        <Time $end>0:00:01</Time>
      </SeekRow>
      <ButtonRow>
        <VideoTitle>SHORT TRUSS</VideoTitle>
        <ButtonGroup>
          <IconButton aria-label="Shuffle">
            <ShuffleIcon />
          </IconButton>
          <IconButton aria-label="Previous">
            <PrevIcon />
          </IconButton>
          <IconButton aria-label="Back 10 seconds">
            <SkipText value="10" />
          </IconButton>
          <PlayButton aria-label="Play">
            <PlayLogo size={34} />
          </PlayButton>
          <IconButton aria-label="Forward 30 seconds">
            <SkipText value="30" flipped />
          </IconButton>
          <IconButton aria-label="Next" disabled>
            <PrevIcon flipped />
          </IconButton>
          <IconButton aria-label="Repeat">
            <RepeatIcon />
          </IconButton>
        </ButtonGroup>
        <ButtonGroup>
          <IconButton aria-label="Subtitles">
            <Icon size={13}>
              <rect x="1.500" y="2.500" width="13" height="11" rx="1.500" />
              <path d="M3.500 11h9" strokeWidth="2" strokeDasharray="3 1" strokeLinecap="butt" />
            </Icon>
          </IconButton>
          <IconButton aria-label="Volume">
            <SpeakerIcon />
          </IconButton>
          <IconButton aria-label="Full screen">
            <Icon size={13}>
              <path d="M9 2h5v5M14 2L2 14M2 9v5h5" />
            </Icon>
          </IconButton>
          <IconButton aria-label="Mini player">
            <Icon size={13}>
              <path d="M3 7V4q0-2 2-2h7.500q2 0 2 2v7q0 2-2 2H10M8.500 2v6h6M2 9.500h4.500V14M6.500 9.500L2 14.500" />
            </Icon>
          </IconButton>
          <IconButton aria-label="More">
            <Icon size={13} fill="#fff" stroke="none">
              <circle cx="3" cy="8" r="1.300" />
              <circle cx="8" cy="8" r="1.300" />
              <circle cx="13" cy="8" r="1.300" />
            </Icon>
          </IconButton>
        </ButtonGroup>
      </ButtonRow>
    </Controls>
  );
};

const WindowsTaskbar = () => (
  <Taskbar>
    <button aria-label="Start">
      <StartIcon />
    </button>
    <SearchBox>
      <Icon size={12} stroke="#e6e6e6" strokeWidth="1.500">
        <circle cx="6.500" cy="6.500" r="5" />
        <path d="M10.500 10.500l4.500 4.500" />
      </Icon>
      <SearchInput type="search" aria-label="Search" placeholder="Search" />
      <Landscape />
    </SearchBox>
    <Apps>
      {apps.map(({ name, icon, badge, active, running }) => (
        <AppButton key={name} aria-label={name} $active={active} $running={running}>
          {icon}
          {badge && <CountBadge>{badge}</CountBadge>}
        </AppButton>
      ))}
    </Apps>
    <Tray>
      <TrayButton aria-label="Hidden icons">
        <Icon size={9}>
          <path d="M2 11l6-6 6 6" strokeWidth="1.700" />
        </Icon>
      </TrayButton>
      <TrayButton aria-label="Cloud sync error">
        <Icon size={13} stroke="none">
          <path d="M3 11q-3-1-2-4 1-2 3-1.500Q6 2 9 4q3 0 3.500 4L9 11z" fill="#cfcfd2" />
          <circle cx="11" cy="11.500" r="4" fill="#d11a2a" />
          <path d="M9.500 10l3 3M12.500 10l-3 3" stroke="#fff" />
        </Icon>
      </TrayButton>
      <TrayButton aria-label="USB">
        <Icon size={13}>
          <path d="M4.500 5.500h6v7q0 2-2 2h-2q-2 0-2-2zM5.500 5.500v-4h4v4M12 8v6" />
        </Icon>
      </TrayButton>
      <TrayButton aria-label="Cloud synced">
        <Icon size={13} stroke="none">
          <path d="M3 10q-3-.5-2-3.500 1-1.500 2.500-1Q5 1 9 2.500q2 .5 2.500 2.500 4 .5 3.500 4l-2 1.500z" fill="#fff" />
          <circle cx="8.500" cy="11" r="4" fill="#5cb531" />
          <path d="M6.800 11l1.300 1.300 2.200-2.500" stroke="#fff" />
        </Icon>
      </TrayButton>
      <TrayText $width={32}>
        ENG
        <br />
        US
      </TrayText>
      <TrayButton $width={18} aria-label="Wi-Fi">
        <WifiIcon />
      </TrayButton>
      <TrayButton $width={16} aria-label="Volume">
        <SpeakerIcon size={12} />
      </TrayButton>
      <TrayButton $width={18} aria-label="Battery">
        <Icon size={14}>
          <rect x="2" y="5" width="11.500" height="7.500" rx="1.500" fill="#f2f2f2" />
          <path d="M15.200 7.500v2.500" />
          <path d="M8 3L5.500 8.500H9L7.500 13" stroke="#1f1f1f" />
        </Icon>
      </TrayButton>
      <TrayText $width={47} $end>
        4:19 PM
        <br />
        5/21/2026
      </TrayText>
    </Tray>
  </Taskbar>
);

const menus = ['File', 'Edit', 'View', 'Camera', 'Draw', 'Tools', 'Window', 'Extensions', 'Help'];

const App = () => (
  <>
    <GlobalStyle />
    <Screen>
      <TitleBar>
        <HomeButton aria-label="Home">
          <Icon size={12}>
            <path d="M2 7.500L8 2l6 5.500V14h-4V9.500H6V14H2z" strokeWidth="1.300" />
          </Icon>
        </HomeButton>
        <PlayLogo size={13} />
        <AppName>Media Player</AppName>
        <CaptionButton aria-label="Minimize">
          <Icon size={8} box={8}>
            <path d="M1 4h6" />
          </Icon>
        </CaptionButton>
        <CaptionButton aria-label="Restore">
          <Icon size={8} box={8}>
            <path d="M1 2.500h4.500V7H1zM2.500 1H6q1 0 1 1v3.500" />
          </Icon>
        </CaptionButton>
        <CaptionButton aria-label="Close">
          <Icon size={8} box={8}>
            <path d="M1 1l6 6M7 1L1 7" />
          </Icon>
        </CaptionButton>
      </TitleBar>
      <MenuBar>
        {menus.map(item => (
          <MenuLink key={item} href="#">
            {item}
          </MenuLink>
        ))}
      </MenuBar>
      <SketchUpToolbar />
      <Viewport>
        <TrussDesigner />
        <ModelScene />
      </Viewport>
      <PlayerControls />
      <LowerStrip />
      <WindowsTaskbar />
    </Screen>
  </>
);

export default App;
